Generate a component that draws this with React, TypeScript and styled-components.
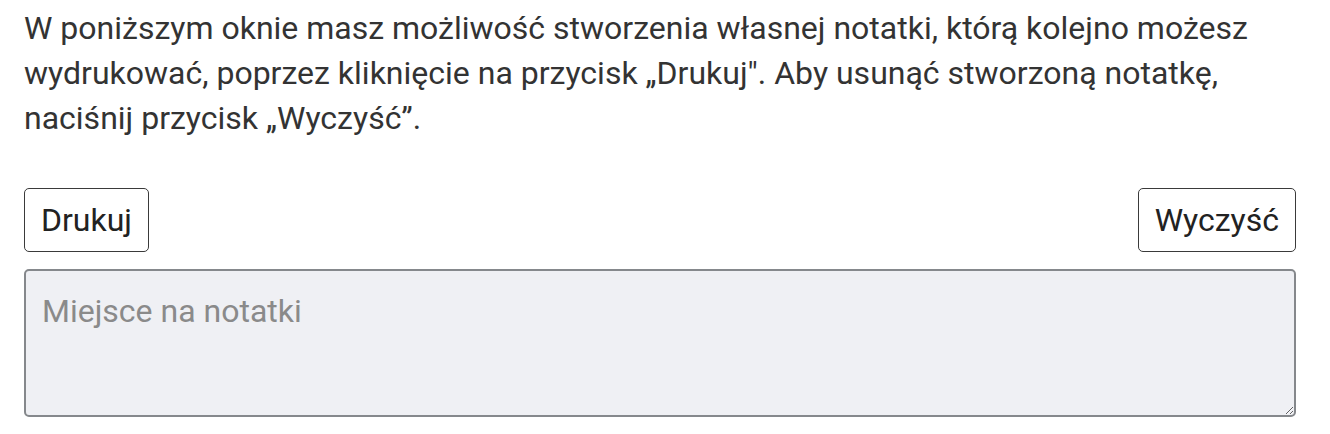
import React from 'react'
import styled, { createGlobalStyle } from 'styled-components'

const GlobalStyle = createGlobalStyle`
  body {
    margin: 0;
    background: #fff;
    font-family: Roboto, "Liberation Sans", sans-serif;
  }
`

const Wrapper = styled.div`
  width: 1272px;
  padding: 6px 0 0 24px;
`

const Intro = styled.p`
  margin: 0;
  font-size: 32px;
  line-height: 1.4;
  color: #333;
`

const Toolbar = styled.div`
  display: flex;
  justify-content: space-between;
  margin-top: 48px;
`

const Button = styled.button`
  height: 64px;
  padding: 0 16px;
  background: #fff;
  border: 1.5px solid #3a3a3a;
  border-radius: 5px;
  font-family: Roboto, "Liberation Sans", sans-serif;
  font-size: 32px;
  color: #222;
  cursor: pointer;
`

const Notes = styled.textarea`
  display: block;
  box-sizing: border-box;
  width: 100%;
  height: 148px;
  margin-top: 17px;
  padding: 16px;
  background: #eff0f4;
  border: 2px solid #85888c;
  border-radius: 5px;
  font-family: Roboto, "Liberation Sans", sans-serif;
  font-size: 32px;
  line-height: 1.5;
  color: #333;

  &::placeholder {
    color: #8a8a8a;
  }
`

const App: React.FC = () => (
  <>
    <GlobalStyle />
    <Wrapper>
      <Intro>
        W poniższym oknie masz możliwość stworzenia własnej notatki, którą kolejno możesz
        wydrukować, poprzez kliknięcie na przycisk „Drukuj". Aby usunąć stworzoną notatkę,
        naciśnij przycisk „Wyczyść”.
      </Intro>
      <Toolbar>
        <Button>Drukuj</Button>
        <Button>Wyczyść</Button>
      </Toolbar>
      <Notes placeholder="Miejsce na notatki" />
    </Wrapper>
  </>
)

export default App
